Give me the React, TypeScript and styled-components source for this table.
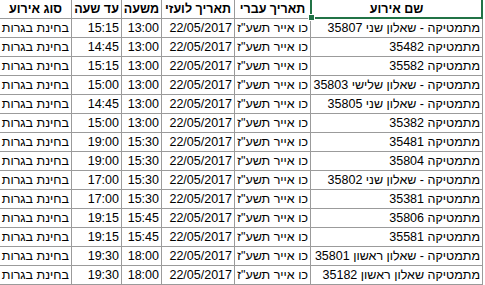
import React from "react";
import styled, { createGlobalStyle } from "styled-components";

const Global = createGlobalStyle`
  html, body { margin: 0; padding: 0; background: #fff; }
  body { width: 485px; height: 285px; overflow: hidden; }
`;

const Sheet = styled.div`
  direction: rtl;
  display: grid;
  grid-template-columns: 171px 75px 72px 39px 49px 71px;
  grid-auto-rows: 18px;
  gap: 1px;
  width: 482px;
  padding-right: 1px;
  padding-bottom: 1px;
  background: #9b9b9b;
  font-family: "Liberation Sans", Arial, sans-serif;
  font-size: 12.5px;
  color: #000;
`;

const Cell = styled.div<{ $head?: boolean; $selected?: boolean }>`
  position: relative;
  background: #fff;
  line-height: 18px;
  white-space: nowrap;
  overflow: ${(p) => (p.$selected ? "visible" : "hidden")};
  padding: 0 2px;
  text-align: ${(p) => (p.$head ? "center" : "right")};
  font-weight: ${(p) => (p.$head ? 700 : 400)};
  z-index: ${(p) => (p.$selected ? 2 : 0)};
`;

const Selection = styled.div`
  position: absolute;
  top: -2px;
  right: -1px;
  bottom: -1px;
  left: -1px;
  border: 2px solid #217346;
  pointer-events: none;
`;

const Handle = styled.div`
  position: absolute;
  left: -3px;
  bottom: -3px;
  width: 5px;
  height: 5px;
  background: #217346;
  box-shadow: 0 0 0 1px #fff;
`;

const headers = ["שם אירוע", "תאריך עברי", "תאריך לועזי", "משעה", "עד שעה", "סוג אירוע"];

const rows: [string, string, string][] = [
  ["מתמטיקה - שאלון שני 35807", "13:00", "15:15"],
  ["מתמטיקה 35482", "13:00", "14:45"],
  ["מתמטיקה 35582", "13:00", "15:15"],
  ["מתמטיקה - שאלון שלישי 35803", "13:00", "15:00"],
  ["מתמטיקה - שאלון שני 35805", "13:00", "14:45"],
  ["מתמטיקה 35382", "13:00", "15:00"],
  ["מתמטיקה 35481", "15:30", "19:00"],
  ["מתמטיקה 35804", "15:30", "19:00"],
  ["מתמטיקה - שאלון שני 35802", "15:30", "17:00"],
  ["מתמטיקה 35381", "15:30", "17:00"],
  ["מתמטיקה 35806", "15:45", "19:15"],
  ["מתמטיקה 35581", "15:45", "19:15"],
  ["מתמטיקה - שאלון ראשון 35801", "18:00", "19:30"],
  ["מתמטיקה שאלון ראשון 35182", "18:00", "19:30"],
];

export default function App() {
  return (
    <>
      <Global />
      <Sheet>
        {headers.map((h, i) => (
          <Cell key={h} $head $selected={i === 0}>
            {h}
            {i === 0 && (
              <Selection>
                <Handle />
              </Selection>
            )}
          </Cell>
        ))}
        {rows.map(([name, from, to], r) => (
          <React.Fragment key={r}>
            <Cell>{name}</Cell>
            <Cell>כו אייר תשע"ז</Cell>
            <Cell>22/05/2017</Cell>
            <Cell>{from}</Cell>
            <Cell>{to}</Cell>
            <Cell>בחינת בגרות</Cell>
          </React.Fragment>
        ))}
      </Sheet>
    </>
  );
}
